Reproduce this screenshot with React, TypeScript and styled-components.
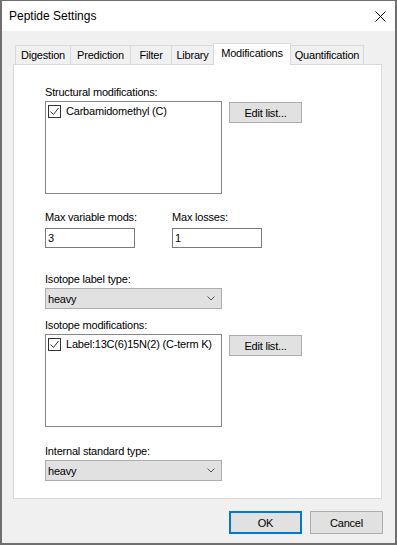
import React from 'react'
import styled, { createGlobalStyle } from 'styled-components'

const GlobalStyle = createGlobalStyle`
  html, body {
    margin: 0;
    padding: 0;
    background: #ffffff;
  }
  body {
    font-family: "Liberation Sans", Arial, sans-serif;
    color: #000;
  }
`

const tabs = [
  { name: 'Digestion', width: 56 },
  { name: 'Prediction', width: 61 },
  { name: 'Filter', width: 42 },
  { name: 'Library', width: 43 },
  { name: 'Modifications', width: 78 },
  { name: 'Quantification', width: 74 },
]

const CloseIcon = () => (
  <svg width="11" height="11" viewBox="0 0 11 11">
    <path d="M0.5 0.5 L10.5 10.5 M10.5 0.5 L0.5 10.5" stroke="#000" strokeWidth="1" fill="none" />
  </svg>
)

const Chevron = () => (
  <svg width="8" height="5" viewBox="0 0 8 5">
    <polyline points="0.5,0.5 4,4 7.5,0.5" stroke="#555" strokeWidth="1" fill="none" />
  </svg>
)

const Check = ({ label }: { label: string }) => (
  <ListItem>
    <CheckBox>
      <svg width="11" height="11" viewBox="0 0 11 11">
        <polyline points="1.5,5.5 4.5,8.5 9.5,2" stroke="#333" strokeWidth="1" fill="none" />
      </svg>
    </CheckBox>
    <span>{label}</span>
  </ListItem>
)

const App: React.FC = () => {
  return (
    <>
      <GlobalStyle />
      <Window>
        <TitleBar>
          <span>Peptide Settings</span>
          <CloseIcon />
        </TitleBar>
        <DialogBody>
          <TabStrip>
            {tabs.map((t) => (
              <Tab key={t.name} w={t.width} active={t.name === 'Modifications'}>
                {t.name}
              </Tab>
            ))}
          </TabStrip>
          <TabPanel>
            <Section>
              <FieldLabel>Structural modifications:</FieldLabel>
              <ListRow>
                <ListBox>
                  <Check label="Carbamidomethyl (C)" />
                </ListBox>
                <EditButton>Edit list...</EditButton>
              </ListRow>
            </Section>

            <Section top={16}>
              <FieldPair>
                <div>
                  <FieldLabel gap={4}>Max variable mods:</FieldLabel>
                  <TextBox>3</TextBox>
                </div>
                <div>
                  <FieldLabel gap={4}>Max losses:</FieldLabel>
                  <TextBox>1</TextBox>
                </div>
              </FieldPair>
            </Section>

            <Section top={24}>
              <FieldLabel>Isotope label type:</FieldLabel>
              <ComboBox>
                <span>heavy</span>
                <Chevron />
              </ComboBox>
            </Section>

            <Section top={9}>
              <FieldLabel>Isotope modifications:</FieldLabel>
              <ListRow>
                <ListBox>
                  <Check label="Label:13C(6)15N(2) (C-term K)" />
                </ListBox>
                <EditButton>Edit list...</EditButton>
              </ListRow>
            </Section>

            <Section top={17}>
              <FieldLabel>Internal standard type:</FieldLabel>
              <ComboBox>
                <span>heavy</span>
                <Chevron />
              </ComboBox>
            </Section>
          </TabPanel>
          <Footer>
            <DialogButton primary>OK</DialogButton>
            <DialogButton>Cancel</DialogButton>
          </Footer>
        </DialogBody>
      </Window>
    </>
  )
}
export default App

const Window = styled.div`
  width: 397px;
  height: 545px;
  box-sizing: border-box;
  border: 2px solid #6f6f6f;
  border-top-width: 1px;
  background: #f0f0f0;
  display: flex;
  flex-direction: column;
`

const TitleBar = styled.div`
  height: 30px;
  flex-shrink: 0;
  background: #ffffff;
  display: flex;
  align-items: center;
  justify-content: space-between;
  padding: 0 9px 0 7px;
  font-size: 12px;
`

const DialogBody = styled.div`
  padding: 12px 11px 0 11px;
  font-size: 11px;
  letter-spacing: -0.2px;
`

const TabStrip = styled.div`
  display: flex;
  align-items: flex-end;
  height: 21px;
  padding-left: 2px;
  position: relative;
  z-index: 1;
`

const Tab = styled.div<{ w: number; active?: boolean }>`
  width: ${(p) => p.w}px;
  height: ${(p) => (p.active ? 22 : 19)}px;
  margin-right: -1px;
  margin-bottom: ${(p) => (p.active ? -1 : 0)}px;
  box-sizing: border-box;
  border: 1px solid #d9d9d9;
  border-bottom: none;
  background: ${(p) => (p.active ? '#ffffff' : '#f0f0f0')};
  display: flex;
  align-items: center;
  justify-content: center;
  padding-bottom: ${(p) => (p.active ? 3 : 0)}px;
  white-space: nowrap;
`

const TabPanel = styled.div`
  width: 369px;
  height: 435px;
  box-sizing: border-box;
  border: 1px solid #d9d9d9;
  background: #ffffff;
  padding: 20px 0 0 31px;
`

const Section = styled.div<{ top?: number }>`
  margin-top: ${(p) => p.top ?? 0}px;
`

const FieldLabel = styled.div<{ gap?: number }>`
  height: 14px;
  line-height: 14px;
  margin-bottom: ${(p) => p.gap ?? 2}px;
  white-space: nowrap;
`

const ListRow = styled.div`
  display: flex;
  align-items: flex-start;
  gap: 7px;
`

const FieldPair = styled.div`
  display: grid;
  grid-template-columns: 90px 90px;
  column-gap: 37px;
`

const ListBox = styled.div`
  width: 177px;
  height: 93px;
  box-sizing: border-box;
  border: 1px solid #828790;
  background: #ffffff;
  padding: 2px;
`

const ListItem = styled.div`
  display: flex;
  align-items: center;
  gap: 5px;
  height: 14px;
  white-space: nowrap;
`

const CheckBox = styled.div`
  width: 13px;
  height: 13px;
  box-sizing: border-box;
  border: 1px solid #333;
  background: #fff;
  display: flex;
  align-items: center;
  justify-content: center;
  flex-shrink: 0;
`

const EditButton = styled.div`
  width: 73px;
  height: 21px;
  margin-top: 1px;
  box-sizing: border-box;
  border: 1px solid #adadad;
  background: #e1e1e1;
  display: flex;
  align-items: center;
  justify-content: center;
`

const TextBox = styled.div`
  width: 90px;
  height: 20px;
  box-sizing: border-box;
  border: 1px solid #7a7a7a;
  background: #ffffff;
  padding-left: 2px;
  display: flex;
  align-items: center;
`

const ComboBox = styled.div`
  width: 177px;
  height: 21px;
  box-sizing: border-box;
  border: 1px solid #adadad;
  background: #e1e1e1;
  padding: 0 6px 0 2px;
  display: flex;
  align-items: center;
  justify-content: space-between;
`

const Footer = styled.div`
  display: flex;
  justify-content: flex-end;
  gap: 8px;
  margin-top: 12px;
  margin-right: 1px;
`

const DialogButton = styled.div<{ primary?: boolean }>`
  width: 73px;
  height: 23px;
  box-sizing: border-box;
  border: ${(p) => (p.primary ? '2px solid #0078d7' : '1px solid #adadad')};
  background: #e1e1e1;
  display: flex;
  align-items: center;
  justify-content: center;
`
